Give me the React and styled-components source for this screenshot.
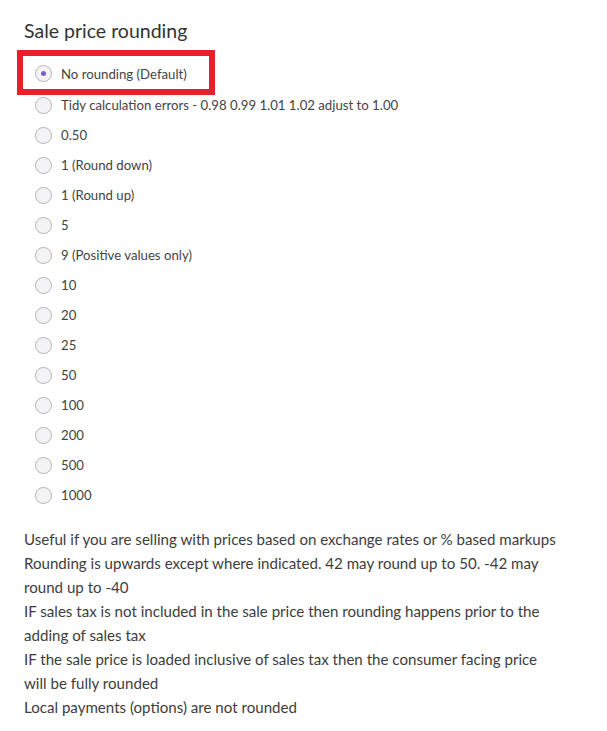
import styled, { createGlobalStyle } from 'styled-components';

const GlobalStyle = createGlobalStyle`
	body {
		margin: 0;
		background: #ffffff;
		font-family: Lato, 'Open Sans', sans-serif;
		color: #3d3d3d;
	}
`;

const Page = styled.div`
	padding: 17px 50px 20px 24px;
	width: 607px;
	box-sizing: border-box;
`;

const Title = styled.h2`
	font-size: 19.5px;
	font-weight: 400;
	color: #333;
	margin: 0 0 5px 0;
	line-height: 28px;
`;

const Options = styled.div`
	display: flex;
	flex-direction: column;
`;

const Highlight = styled.div`
	margin: 0 0 -5px -7px;
	width: 198px;
	height: 45px;
	box-sizing: border-box;
	border: 6px solid #e8202a;
	display: flex;
	align-items: center;
	padding: 2px 0 0 1px;
	position: relative;
	z-index: 1;
`;

const Option = styled.label`
	display: flex;
	align-items: center;
	gap: 9px;
	height: 30px;
	padding-left: 11px;
	font-size: 13.2px;
	color: #444;
	cursor: pointer;
`;

const Radio = styled.span`
	width: 17px;
	height: 17px;
	border-radius: 50%;
	border: 1px solid #b4b4b8;
	background: #f3f3f6;
	box-sizing: border-box;
	display: flex;
	align-items: center;
	justify-content: center;
	flex-shrink: 0;

	&::after {
		content: '';
		width: 5px;
		height: 5px;
		border-radius: 50%;
		background: ${({ $checked }) => ($checked ? '#7a62c6' : 'transparent')};
	}
`;

const Notes = styled.div`
	margin-top: 17px;
	font-size: 15.1px;
	line-height: 24px;
	color: #3d3d3d;

	p {
		margin: 0;
	}
`;

const options = [
	'Tidy calculation errors - 0.98 0.99 1.01 1.02 adjust to 1.00',
	'0.50',
	'1 (Round down)',
	'1 (Round up)',
	'5',
	'9 (Positive values only)',
	'10',
	'20',
	'25',
	'50',
	'100',
	'200',
	'500',
	'1000',
];

const App = () => {
	return (
		<Page>
			<GlobalStyle />
			<Title>Sale price rounding</Title>
			<Options>
				<Highlight>
					<Option>
						<Radio $checked />
						No rounding (Default)
					</Option>
				</Highlight>
				{options.map((label) => (
					<Option key={label}>
						<Radio />
						{label}
					</Option>
				))}
			</Options>
			<Notes>
				<p>Useful if you are selling with prices based on exchange rates or % based markups</p>
				<p>Rounding is upwards except where indicated. 42 may round up to 50. -42 may round up to -40</p>
				<p>IF sales tax is not included in the sale price then rounding happens prior to the adding of sales tax</p>
				<p>IF the sale price is loaded inclusive of sales tax then the consumer facing price will be fully rounded</p>
				<p>Local payments (options) are not rounded</p>
			</Notes>
		</Page>
	);
};

export default App;
